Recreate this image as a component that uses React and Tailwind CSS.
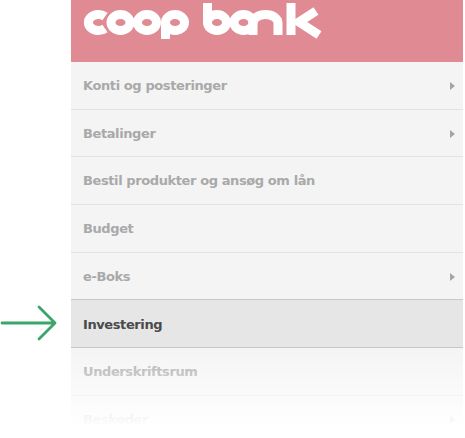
const rows = [
  { label: 'Konti og posteringer', arrow: true },
  { label: 'Betalinger', arrow: true },
  { label: 'Bestil produkter og ansøg om lån' },
  { label: 'Budget' },
  { label: 'e-Boks', arrow: true, beforeActive: true },
  { label: 'Investering', active: true },
  { label: 'Underskriftsrum' },
  { label: 'Beskeder', arrow: true },
]

function Logo() {
  return (
    <svg width="250" height="44" viewBox="0 0 250 44" fill="none" stroke="#fff" strokeWidth="9" className="block ml-[12px]">
      <path d="M22 16.500a10 8 0 1 0 0 12" />
      <ellipse cx="37.500" cy="22.500" rx="9.500" ry="8" />
      <ellipse cx="64" cy="22.500" rx="9.500" ry="8" />
      <ellipse cx="92" cy="22.500" rx="9.500" ry="8" />
      <path d="M82.500 22.500V39" />
      <ellipse cx="134" cy="22.500" rx="9.500" ry="8" />
      <path d="M124.500 22.500V3" />
      <ellipse cx="160.500" cy="22.500" rx="9.500" ry="8" />
      <path d="M170 14v21" />
      <path d="M170 23a12.500 8.500 0 0 1 25 0v12" />
      <path d="M208 3v32" />
      <path d="M233 11l-17 11 20 13" />
    </svg>
  )
}

export default function App() {
  return (
    <div className="relative h-[438px] w-[465px] overflow-hidden bg-white font-['DejaVu_Sans',sans-serif]">
      <div className="absolute left-0 top-[305px]">
        <svg width="60" height="40" viewBox="0 0 60 40" fill="none" stroke="#3aa66a" strokeWidth="2.800" strokeLinecap="round" strokeLinejoin="round">
          <path d="M2 18h53M39 2l16 16-16 16" />
        </svg>
      </div>
      <div className="ml-[71px] w-[392px]">
        <div className="h-[62px] bg-[#e08b93]">
          <Logo />
        </div>
        {rows.map((r) => (
          <div
            key={r.label}
            className={`flex h-[47.7px] items-center justify-between border-b-[1.5px] pl-[12px] pr-[8px] pt-px text-[13px] font-bold tracking-[-0.4px] ${
              r.active
                ? 'bg-[#e6e6e6] border-[#c8c8c8] text-[#4a4a4a]'
                : r.beforeActive
                  ? 'bg-[#f4f4f4] border-[#c8c8c8] text-[#a9a9a9]'
                  : 'bg-[#f4f4f4] border-[#e2e2e2] text-[#a9a9a9]'
            }`}
          >
            <span>{r.label}</span>
            {r.arrow && <span className="h-0 w-0 border-y-[4px] border-l-[5px] border-y-transparent border-l-[#a5a5a5]" />}
          </div>
        ))}
      </div>
      <div className="pointer-events-none absolute bottom-0 left-0 h-[91px] w-full bg-gradient-to-b from-white/0 to-white to-[88%]" />
    </div>
  )
}
